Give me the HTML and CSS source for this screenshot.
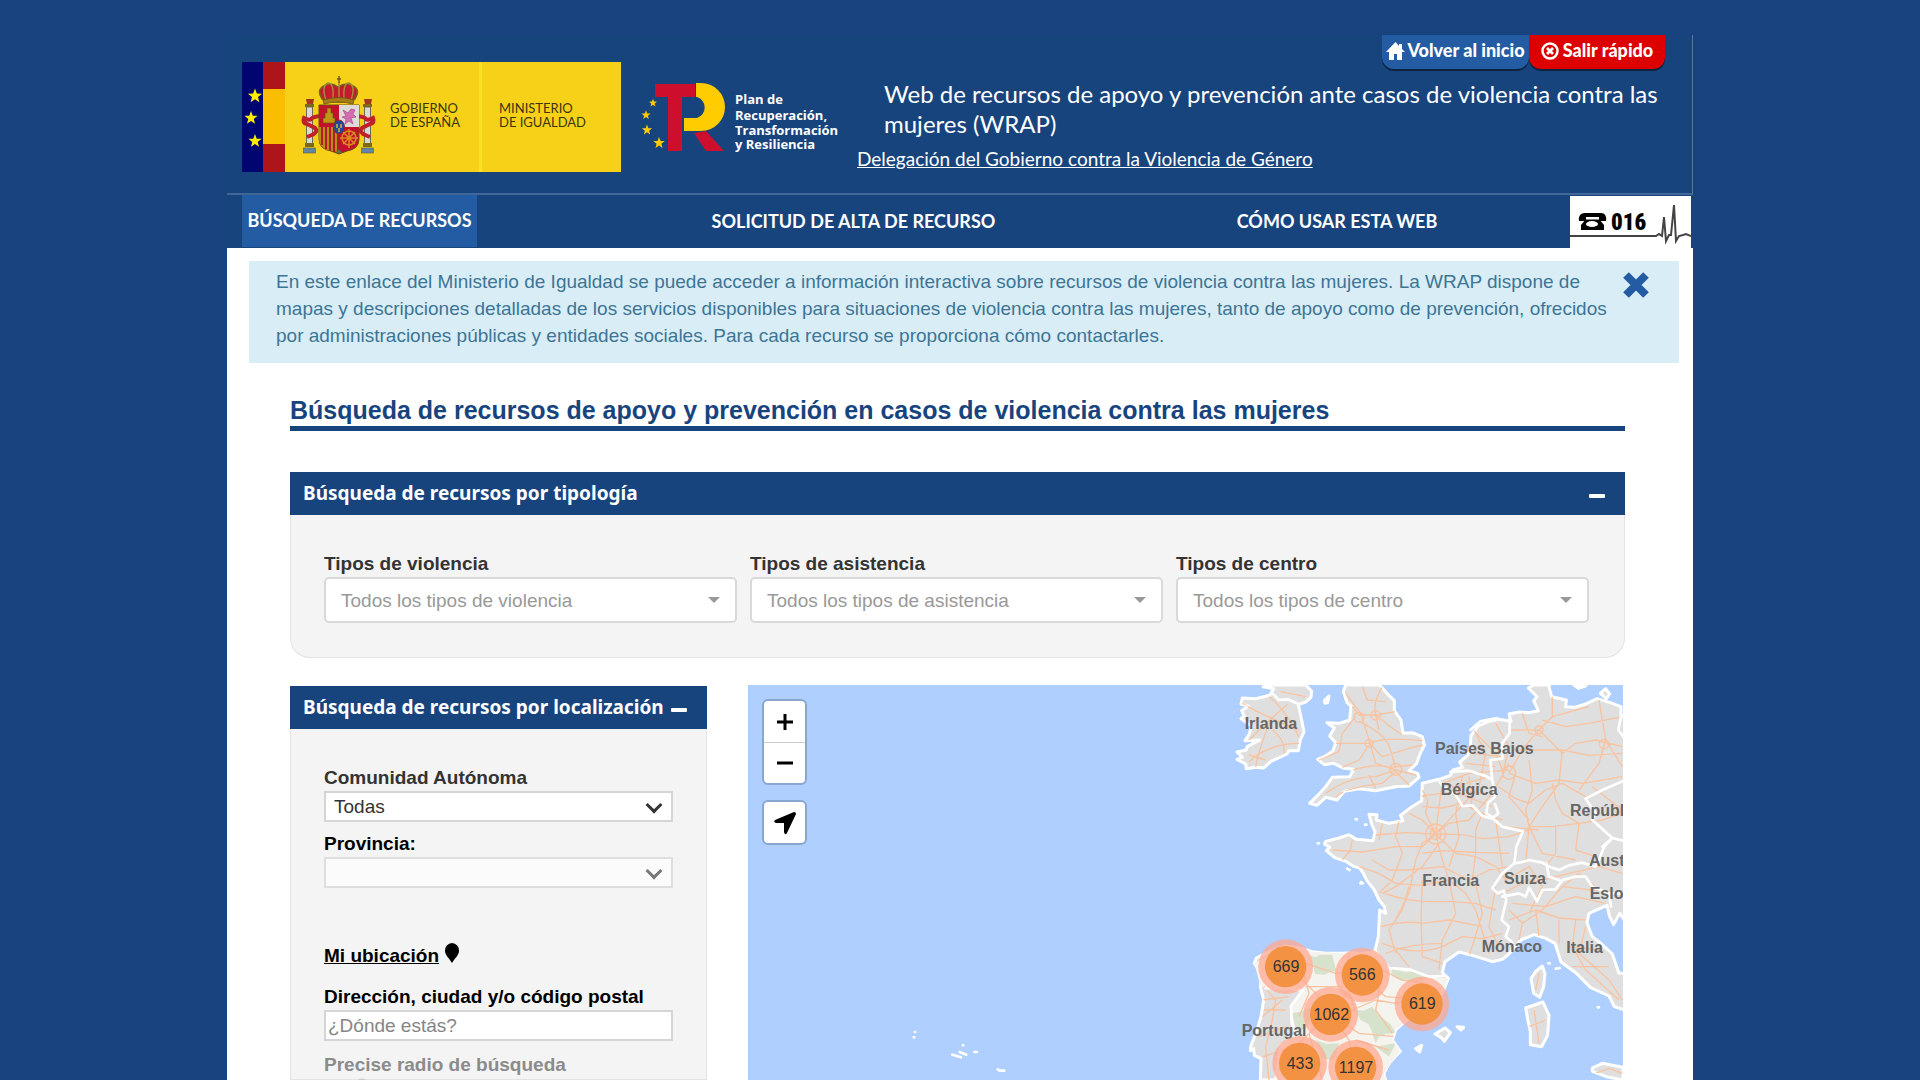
FILE: index.html
```html
<!DOCTYPE html>
<html lang="es">
<head>
<meta charset="utf-8">
<meta name="viewport" content="width=device-width, initial-scale=1">
<title>Web de recursos de apoyo y prevención (WRAP)</title>
<link rel="stylesheet" href="styles.css">
</head>
<body>
<div class="page">
  <header class="header">
    <div class="logos">
      <svg class="logo-gob" viewBox="0 0 379 110" role="img" aria-label="Gobierno de España. Ministerio de Igualdad">
        <defs><polygon id="star" points="0,-6 1.5,-2 5.7,-1.9 2.4,.8 3.5,4.9 0,2.5 -3.5,4.9 -2.4,.8 -5.7,-1.9 -1.5,-2"/></defs>
        <rect width="379" height="110" fill="#f7d117"/>
        <rect width="21" height="110" fill="#000671"/>
        <rect x="21" width="22" height="110" fill="#ad1519"/>
        <rect x="21" y="27" width="22" height="55" fill="#fabd00"/>
        <g fill="#ffed00"><use href="#star" transform="translate(13 34) scale(1.25)"/><use href="#star" transform="translate(9 56) scale(1.15)"/><use href="#star" transform="translate(13 79) scale(1.15)"/></g>
        <rect x="237" width="3" height="110" fill="#fbe122"/>
        <!-- escudo -->
        <g>
          <g fill="#d9d9d4" stroke="#6b6a55" stroke-width="1"><rect x="64.500" y="45" width="6" height="38"/><rect x="122.500" y="45" width="6" height="38"/></g>
          <g fill="#a5371e"><path d="M64 37h8l-1 5h-6zM122 37h8l-1 5h-6z"/></g>
          <g fill="#7d6a16"><rect x="63" y="42" width="9" height="3"/><rect x="121" y="42" width="9" height="3"/><rect x="63" y="81" width="9" height="4"/><rect x="121" y="81" width="9" height="4"/></g>
          <g fill="#5f87a5" stroke="#5b5b3b" stroke-width=".6"><rect x="61.500" y="86" width="12" height="5"/><rect x="119.500" y="86" width="12" height="5"/></g>
          <g fill="none" stroke="#c31f2b" stroke-width="4"><path d="M78 54q-8 1-9 3t-7-1q-2 5 3 6l8 4q3 3-1 6l-7 3M115 54q8 1 9 3t7-1q2 5-3 6l-8 4q-3 3 1 6l7 3"/></g>
          <path d="M77 43h40v34q0 10-12 12l-8 3-8-3q-12-2-12-12z" fill="#c4102a" stroke="#6a4d16" stroke-width="1"/>
          <path d="M97 43h20v22H97z" fill="#dedad6"/>
          <path d="M77 65h20v25q-20-1-20-13z" fill="#b98c13"/>
          <path d="M80 65v18M84 65v22M88 65v24M92 65v25M96 65v26" stroke="#b21c24" stroke-width="2"/>
          <path d="M81 61v-5h2v-5h2v-5h4v5h2v5h2v5z" fill="#c19512" stroke="#6c520e" stroke-width=".7"/>
          <path d="M101 48l5 3 3-4 4 1-2 4 3 3-5 1 2 6-4-3-4 3 1-5-4-2 4-1z" fill="#d66bb4" stroke="#a8478d" stroke-width=".7"/>
          <g fill="none" stroke="#d98c1d" stroke-width="1.500"><circle cx="107" cy="76" r="7"/><path d="M107 67v19M98 76h18M101 70l12 12M113 70l-12 12"/></g>
          <ellipse cx="97" cy="65" rx="5.500" ry="7" fill="#1d4a9c" stroke="#9f2130" stroke-width="1"/>
          <path d="M95 62v4M99 62v4M97 66v4" stroke="#d9b92a" stroke-width="1.500"/>
          <path d="M94 91l3-4 3 4z" fill="#4e7b47"/>
          <path d="M80 37q-5-8 0-12 8-6 16 0 9-6 17 0 5 4 0 12-16 6-33 0z" fill="#c61a2c" stroke="#77601a" stroke-width="1.500"/>
          <path d="M84 38q-5-14 2-17 6 0 5 15M109 38q5-14-2-17-6 0-5 15M97 35V20" fill="none" stroke="#a28a3b" stroke-width="1.500"/>
          <path d="M81 38q16-5 31 0l-1 4q-15-4-29 0z" fill="#a57c16" stroke="#6b4d12" stroke-width=".8"/>
          <path d="M97 14v7M95 17h4" stroke="#6c5a18" stroke-width="1.400"/>
        </g>
        <g class="gob-text"><text x="148" y="51">GOBIERNO</text><text x="148" y="65">DE ESPAÑA</text><text x="257" y="51">MINISTERIO</text><text x="257" y="65">DE IGUALDAD</text></g>
      </svg>
      <svg class="logo-plan" viewBox="0 0 202 110" role="img" aria-label="Plan de Recuperación, Transformación y Resiliencia">
        <path d="M16 22h40v13H43v54H29V35H16z" fill="#cd0f2d"/>
        <path d="M55 71l12-2 18 20H67z" fill="#cd0f2d"/>
        <path d="M57 21h5a24 24 0 0 1 0 48H45V56h13a11 11 0 0 0 0-21h-1z" fill="#ffcc00"/>
        <g fill="#ffcc00"><use href="#star" transform="translate(14 41) scale(.7)"/><use href="#star" transform="translate(7 53) scale(.8)"/><use href="#star" transform="translate(8 68) scale(.9)"/><use href="#star" transform="translate(20 81)"/></g>
        <g class="plan-text"><text x="96" y="42">Plan de</text><text x="96" y="58">Recuperación,</text><text x="96" y="73">Transformación</text><text x="96" y="87">y Resiliencia</text></g>
      </svg>
    </div>
    <div class="heading">
      <div class="quick">
        <a class="quick-link home" href="#"><svg width="19" height="18" viewBox="0 0 19 18"><path d="M9.500 0L0 10h3v8h5v-6h3v6h5v-8h3l-3-3V2h-3v2z" fill="#fff"/></svg>Volver al inicio</a>
        <a class="quick-link exit" href="#"><svg width="18" height="18" viewBox="0 0 18 18"><g fill="none" stroke="#fff"><circle cx="9" cy="9" r="7.500" stroke-width="2.500"/><path d="M6 6l6 6M12 6l-6 6" stroke-width="2.800"/></g></svg>Salir rápido</a>
      </div>
      <h1>Web de recursos de apoyo y prevención ante casos de violencia contra las mujeres (WRAP)</h1>
      <a class="delegation" href="#">Delegación del Gobierno contra la Violencia de Género</a>
    </div>
  </header>
  <nav class="nav">
    <a class="active" href="#">BÚSQUEDA DE RECURSOS</a>
    <a href="#">SOLICITUD DE ALTA DE RECURSO</a>
    <a href="#">CÓMO USAR ESTA WEB</a>
    <a class="phone" href="#" aria-label="Teléfono 016">
      <svg viewBox="0 0 121 52"><rect width="121" height="52" fill="#fff"/>
        <path d="M9 25q-1-8 6-8h16q6 0 5 8h-7v-4H16v4z"/><path d="M16 23h13l5 6v5H11v-5z"/><ellipse cx="22" cy="28" rx="6" ry="3" fill="#fff"/><path d="M16 23h13" stroke="#fff"/>
        <text class="phone-number" x="41" y="34">016</text>
        <path d="M0 40h86l3-2 3 2 2-19 2 24 3-6h2l3-30 2 36 3-5 4-1 3-1 5 2" fill="none" stroke="#444" stroke-width="2"/></svg>
    </a>
  </nav>
  <main>
    <div class="alert">
      <p>En este enlace del Ministerio de Igualdad se puede acceder a información interactiva sobre recursos de violencia contra las mujeres. La WRAP dispone de mapas y descripciones detalladas de los servicios disponibles para situaciones de violencia contra las mujeres, tanto de apoyo como de prevención, ofrecidos por administraciones públicas y entidades sociales. Para cada recurso se proporciona cómo contactarles.</p>
      <button class="close" type="button" aria-label="Cerrar"><svg width="26" height="26" viewBox="0 0 26 26"><path d="M3 3l20 20M23 3L3 23" stroke="#245ca3" stroke-width="8"/></svg></button>
    </div>
    <div class="content">
      <h2>Búsqueda de recursos de apoyo y prevención en casos de violencia contra las mujeres</h2>
      <section class="panel rounded">
        <div class="panel-head"><h3>Búsqueda de recursos por tipología</h3><button type="button" class="toggle" aria-label="Contraer"></button></div>
        <div class="types">
          <div><label for="t1">Tipos de violencia</label><div class="pick"><select id="t1"><option>Todos los tipos de violencia</option></select></div></div>
          <div><label for="t2">Tipos de asistencia</label><div class="pick"><select id="t2"><option>Todos los tipos de asistencia</option></select></div></div>
          <div><label for="t3">Tipos de centro</label><div class="pick"><select id="t3"><option>Todos los tipos de centro</option></select></div></div>
        </div>
      </section>
      <div class="lower">
        <section class="panel">
          <div class="panel-head"><h3>Búsqueda de recursos por localización</h3><button type="button" class="toggle" aria-label="Contraer"></button></div>
          <form class="place">
            <label for="ca">Comunidad Autónoma</label>
            <div class="drop"><select id="ca"><option>Todas</option></select></div>
            <label class="dark" for="prov">Provincia:</label>
            <div class="drop off"><select id="prov" disabled><option></option></select></div>
            <p class="mine"><a href="#">Mi ubicación</a><svg width="16" height="20" viewBox="0 0 16 20"><path d="M8 0a7.500 7.500 0 0 1 7 8c0 4-4 7-7 12C5 15 1 12 1 8a7.500 7.500 0 0 1 7-8z"/></svg></p>
            <label class="dark" for="dir">Dirección, ciudad y/o código postal</label>
            <input id="dir" type="text" placeholder="¿Dónde estás?">
            <label class="muted" for="radio">Precise radio de búsqueda</label>
            <input id="radio" class="range" type="range" min="0" max="100" value="9" disabled>
          </form>
        </section>
        <section class="map" aria-label="Mapa de recursos">
          <svg class="map-canvas" viewBox="-1386 15 2628 1185" preserveAspectRatio="xMaxYMin slice">
            <defs>
              <path id="mainland" d="M975 15L958 24 984 50 974 62 988 92 960 98 930 96 900 102 906 124 870 118 840 124 808 138 786 166 784 200 776 226 752 246 760 262 732 270 724 286 690 298 640 310 638 362 606 382 574 406 582 422 540 430 502 420 504 404 480 403 488 432 498 456 492 482 442 478 420 464 390 474 350 484 346 492 362 502 352 512 376 532 410 544 436 560 452 564 464 582 474 602 496 630 510 660 526 680 530 700 512 690 510 730 508 770 498 812 470 824 434 818 400 820 350 820 310 815 280 806 230 798 180 815 142 834 136 850 156 880 154 920 164 960 156 1010 144 1050 126 1096 124 1112 134 1106 136 1126 156 1136 154 1200 H530L524 1182 540 1150 574 1114 550 1080 560 1050 604 1010 660 970 700 940 718 895 700 878 708 845 750 816 790 826 850 845 880 838 900 822 936 780 975 764 1010 775 1038 790 1056 846 1100 878 1144 922 1200 948 1216 980 1260 994V880L1230 880 1210 822 1178 792 1150 770 1134 728 1140 700 1194 676 1202 710 1214 734 1232 700 1260 740V100L1236 110 1236 80 1204 68 1164 56 1130 72 1096 82 1070 80 1072 60 1028 50 1020 20 1022 15z"/>
              <path id="isles" d="M170 15L162 20 194 26 182 46 140 56 100 54 96 72 118 78 98 92 106 108 96 116 128 138 120 164 108 182 152 180 114 200 112 210 84 216 100 232 84 238 110 252 112 266 140 262 164 264 186 244 234 222 240 212 268 212 274 180 285 156 278 120 268 74 290 66 306 52 308 34 290 15zM410 15L403 34 414 68 426 78 422 120 390 130 354 128 376 144 362 168 380 188 372 212 346 230 326 238 346 254 374 250 402 264 434 268 422 290 370 292 350 320 322 350 302 370 324 376 350 352 384 360 406 334 450 326 500 332 560 320 600 318 630 292 626 280 600 272 622 252 634 220 646 196 640 170 610 158 582 160 576 120 556 92 556 62 534 40 512 15zM1094 15l14 10 20-6 4-4zM1174 40l16-14 12 16-10 14zM346 62l14-14-4 20-8 2zM966 896l14-22 20-16 8 22-4 40-12 32-18-12zM950 984l52-18 18 40-4 60-18 34-34-6 0-40-8-36zM1150 1164l30-14 62 12v38l-50-10-42-16zM678 1062l30-18 16 14-18 26-10-12zM744 1040l20 2-8 8zM620 1106l18-10-6 20z"/>
              <clipPath id="land"><use href="#mainland"/><use href="#isles"/></clipPath>
              <clipPath id="spain"><path d="M136 850L154 918 170 925 236 924 280 932 246 978 248 1030 262 1062 214 1100 200 1200H530L524 1182 574 1114 550 1080 560 1050 604 1010 700 940 718 895 660 890 600 868 540 864 498 812 400 820 310 815 230 798z"/></clipPath>
            </defs>
            <rect x="-1386" y="15" width="2700" height="1400" fill="#aecfff"/>
            <g fill="#dfdfdf" stroke="#fff" stroke-width="9" stroke-linejoin="round"><use href="#isles"/><use href="#mainland"/></g>
            <g clip-path="url(#spain)">
              <rect x="100" y="780" width="640" height="430" fill="#f5f3ee"/>
              <g fill="#cfddc4" opacity=".8"><path d="M300 826l20 6 12-8 38 0 4 20 8 28-20 4-14 8-30-2-4-22zM548 866l40 10 40-4 24 20-14 12-30 2-16-8-14 6-30-16zM440 990l24 2 26-12 20 26 34 26 16 26-30 4-16 8-24-14-12-24-24-12zM250 1000l30-6 30-14-4 30-14 34-30 10zM320 1080l34 12 36-2-6 26-14 26-30-8zM500 1100l60-10-20 40zM480 1030l40 20-20 40zM230 900l40-4-20 24z"/></g>
            </g>
            <g class="roads" clip-path="url(#land)">
              <path d="M120 180Q170 130 236 72M100 70Q150 100 268 150M180 50Q230 90 270 170M120 245Q180 190 270 190M140 262Q150 200 190 110M190 150Q230 180 225 220M215 35L290 50M120 225L170 240"/>
              <path d="M410 40L455 100 480 180 500 250 560 270M520 20Q490 70 500 105 540 140 580 165M430 80L450 105 500 105 560 95M440 110L400 160 390 215 330 240M480 190Q530 170 640 182M450 125Q530 160 545 210L560 265M380 190L480 190 520 230 600 205 640 195M400 262L450 240 480 195M350 340Q420 290 500 290L560 270 620 285M380 350Q420 320 520 310L560 275 600 315M430 270Q500 250 540 262L610 255M460 20L475 60 530 65M500 105L510 150M480 285L500 325"/>
              <circle cx="560" cy="268" r="18"/><circle cx="450" cy="112" r="15"/><circle cx="500" cy="106" r="14"/><circle cx="480" cy="190" r="12"/>
              <path d="M680 462L650 400 656 360 640 330M680 462L690 380 700 310 780 280 900 270M680 462L720 430 780 420 850 340 900 250M680 462Q740 400 810 320L830 220 790 140M680 462L760 464 820 476 900 470 960 450M680 462L740 520 800 530 860 560 890 600M680 462L700 540 720 600 770 640 800 690 840 820M680 462L640 490 620 540 600 640 560 720M680 462L640 500 560 500 460 516 370 510M680 462L590 458 500 465M680 462L640 420 600 400M640 380L700 384 760 370 820 400 880 420M570 420L560 470 580 520 550 600 510 640M430 480L424 510 400 540M640 520L700 512 780 516 900 520M490 540L540 570 600 570 700 560 780 600 840 570 900 560M450 560L510 580 560 610 640 616 720 600M760 290L740 400 750 470 720 560M820 400L800 450 800 520 790 600M690 490L640 560 560 620 520 640M860 420L870 490 880 560M520 430L510 480M620 350L700 340 830 340"/>
              <circle cx="680" cy="462" r="16"/><circle cx="680" cy="462" r="30"/>
              <path d="M530 640Q600 670 720 664L800 670 860 690M515 740Q590 720 640 730L720 720 820 740M520 790Q620 830 700 800L760 770 820 776 880 760M600 620L580 690 540 750 560 820M640 600L636 720 640 830M720 600L740 700 700 780 690 870M800 610L820 700 780 830M860 620L840 740 870 800M530 820Q600 790 700 790M640 830L700 850M560 810L600 860"/>
              <path d="M1030 20L1030 110 980 160 940 210 900 280M1000 120L1070 140 1140 130 1240 110M900 150L990 150 1060 220 1100 190 1160 180 1240 200M910 210L1060 210 1140 226 1240 220M960 240L970 330 950 390 960 440 950 550M900 280L980 310 1050 300 1120 310 1240 290M870 320L920 356 960 370 1010 330 1060 310 1130 350M920 280L900 350 960 420M1060 210L1050 310 1000 380 960 440 1030 440 1110 430 1180 420M1170 60L1190 180 1170 250 1110 330M1110 430L1060 400 1040 360 1030 310M960 440L1000 520 1100 540M1040 440L1040 520 1010 560M1110 430L1100 510 1160 530M890 440L990 450M1190 180L1240 260M860 130L900 200 880 290M800 160L860 220 880 270M790 220L880 230M770 250L860 260M940 100L960 160 1000 170M1030 110L1140 80M1150 320L1240 390M1180 420L1240 400"/>
              <circle cx="900" cy="278" r="20"/><circle cx="1185" cy="192" r="14"/><circle cx="990" cy="150" r="12"/>
              <path d="M720 310L760 345 850 380M740 320L840 290M780 290L790 390M890 600L960 560 1000 620 960 700M880 640L960 600 1010 610M900 720L980 690 1050 714 1130 720M900 690L940 730 1000 690 1060 620 1240 640M910 670L1010 680 1100 650 1190 670M980 690L990 770M940 730L930 780M1050 720L1050 790M1100 720L1090 800 1130 870 1230 960M1130 740L1110 820 1200 900 1240 960M1080 800L1170 810M1090 860L1200 860M1000 600L1080 580 1170 560 1240 580M1060 620L1110 580 1160 620M990 880L980 930M975 990L990 1090M960 1040L1010 1020M1160 1180L1200 1165 1240 1180"/>
              <path d="M170 860L290 850 380 880 500 860M160 960L240 950M165 990L230 990M165 920L200 960 190 1020M150 1070L230 1040M160 1130L260 1100M180 1200L170 1100 190 1020M365 1000L460 885M365 1000L320 940 250 870M365 1000L280 1080 200 1180M365 1000L420 1080 440 1160M365 1000L430 990 500 960 560 970 640 950M365 1000L450 1060 560 1070M460 885L530 950 640 960M500 890L510 940 500 990 550 1060M280 860L300 940 270 1010M440 1080L540 1110M290 920L400 920M220 960L160 1010M520 870L580 900 640 910M420 820L410 900 440 1000M300 1060L340 1200"/>
            </g>
            <g class="borders">
              <path d="M688 300L702 320 740 344 760 378 790 376 820 408 852 416 880 440 942 454 922 500 916 550 940 546 960 540 1000 548 1020 560 1050 570 1080 556 1120 548 1160 560 1186 500 1210 474 1150 420 1160 400 1130 356 1180 330 1250 300M724 276L780 272 830 288 850 300 844 240 880 236 880 190 902 160 902 104M850 300L858 350 836 370 832 400 852 412M858 372L868 400 852 414M916 550L880 580 850 624 866 640 884 632 892 660 878 720 900 740 890 770 912 788M880 650L930 640 950 650 960 622 984 664 1000 630 1040 628 1060 600 1100 590 1130 590 1150 620 1200 640 1250 640M1012 550L1020 590 1050 600M1180 500L1210 474 1250 484M1200 640L1206 680M498 812L540 864 600 868 660 890 705 888M170 925L236 924 280 932 246 978 248 1030 262 1062 214 1100 200 1200M188 38L210 60 236 58 268 72M1236 110L1228 150 1250 180"/>
              <path d="M784 150l30-26 50-10M440 418h4M468 434h4M326 490h4M414 566l8 4M456 606l6 4M1018 850h4M1040 866l12-2M1166 982h4M454 610h4"/>
              <path d="M-886 1072h2M-882 1056h1M-770 1124l26 8M-748 1116l20 8M-738 1096h1M-704 1116h8M-634 1168l6 4h14"/>
            </g>
            <g class="places">
              <text x="107" y="148">Irlanda</text><text x="678" y="222">Países Bajos</text><text x="695" y="345">Bélgica</text><text x="1083" y="408">Repúbl</text><text x="1140" y="557">Aust</text><text x="640" y="617">Francia</text><text x="885" y="611">Suiza</text><text x="1142" y="656">Eslo</text><text x="818" y="815">Mónaco</text><text x="1072" y="819">Italia</text><text x="98" y="1068">Portugal</text>
            </g>
            <g class="halo"><circle cx="230" cy="860" r="82"/><circle cx="460" cy="885" r="82"/><circle cx="639" cy="972" r="82"/><circle cx="365" cy="1003" r="82"/><circle cx="272" cy="1150" r="82"/><circle cx="440" cy="1162" r="82"/></g>
            <g class="core"><circle cx="230" cy="860" r="62"/><circle cx="460" cy="885" r="62"/><circle cx="639" cy="972" r="62"/><circle cx="365" cy="1003" r="62"/><circle cx="272" cy="1150" r="62"/><circle cx="440" cy="1162" r="62"/></g>
            <g class="counts"><text x="231" y="876">669</text><text x="460" y="901">566</text><text x="640" y="987">619</text><text x="367" y="1019">1062</text><text x="273" y="1166">433</text><text x="441" y="1178">1197</text></g>
          </svg>
          <div class="controls">
            <div class="bar">
              <button type="button" aria-label="Acercar"><svg width="18" height="18" viewBox="0 0 18 18"><path d="M1 9h16M9 1v16" stroke="#000" stroke-width="3"/></svg></button>
              <button type="button" aria-label="Alejar"><svg width="18" height="18" viewBox="0 0 18 18"><path d="M1 9h16" stroke="#000" stroke-width="3"/></svg></button>
            </div>
            <div class="bar"><button type="button" aria-label="Localizar"><svg width="22" height="24" viewBox="0 0 22 24"><path d="M20 1q2 0 2 2L13 22q-2 3-3-1v-9H2q-3-1-1-3z"/></svg></button></div>
          </div>
        </section>
      </div>
    </div>
  </main>
</div>
</body>
</html>
```
FILE: styles.css
```css
* { box-sizing: border-box; }
body {
  margin: 0;
  height: 100vh;
  overflow: hidden;
  background: #18437f;
  color: #333;
  font: 19px/25px "Liberation Sans", Arial, sans-serif;
}
h1, h2, h3, p { margin: 0; }
svg { display: block; flex: none; }
button, select, input { font: inherit; color: inherit; }
button { padding: 0; border: 0; background: none; cursor: pointer; }

.page {
  display: flex;
  flex-direction: column;
  height: 100%;
  max-width: 1466px;
  margin: 0 auto;
  padding-top: 35px;
}

.header {
  display: flex;
  gap: 15px;
  min-height: 160px;
  padding: 0 27px 0 15px;
  background: #18447e;
  border-right: 1px solid #56779f;
  border-bottom: 2px solid #41669a;
  font-family: Lato, sans-serif;
  color: #fff;
}
.logos { display: flex; gap: 17px; padding-top: 27px; }
.logo-gob { width: 379px; height: 110px; }
.logo-plan { width: 204px; height: 110px; }
.gob-text { font: 13px Lato, sans-serif; fill: #3b3512; }
.plan-text { font: 700 13px "Open Sans", sans-serif; fill: #fff; }
.heading { flex: 1; }
.quick { display: flex; justify-content: flex-end; margin-bottom: 10px; }
.quick-link {
  display: flex;
  align-items: center;
  justify-content: center;
  height: 34px;
  padding-bottom: 3px;
  border-radius: 0 0 12px 12px;
  box-shadow: 0 2px 0 #0c2340;
  font-size: 18px;
  font-weight: 900;
  color: #fff;
  text-decoration: none;
}
.home { width: 147px; gap: 2px; background: #245ca3; }
.exit { width: 136px; gap: 4px; background: #d00; }
h1 { padding-left: 27px; font-size: 24px; line-height: 30px; font-weight: 400; }
.delegation { display: inline-block; margin-top: 8px; line-height: 24px; color: #fff; }

.nav {
  display: grid;
  grid-template-columns: 235px 1fr 214px 249px;
  height: 53px;
  padding-left: 15px;
  background: #18447e;
  font: 700 18px Lato, sans-serif;
  flex: none;
}
.nav a {
  display: flex;
  align-items: center;
  justify-content: center;
  padding-bottom: 2px;
  color: #fff;
  text-decoration: none;
  white-space: nowrap;
}
.nav .active { margin-bottom: 1px; background: #245ca3; }
.nav .phone { justify-content: flex-end; padding: 1px 2px 0 0; }
.phone svg { width: 121px; height: 52px; }
.phone-number { font: 900 23px "Roboto Condensed", Roboto, sans-serif; }

main {
  display: flex;
  flex-direction: column;
  flex: 1;
  min-height: 0;
  background: #fff;
}
.alert {
  display: flex;
  gap: 7px;
  margin: 13px 14px 0 22px;
  padding: 7px 30px 14px 27px;
  background: #d9edf7;
  color: #3d7595;
  line-height: 27px;
}
.alert p { flex: 1; }
.close { align-self: flex-start; margin-top: 4px; }

.content {
  display: flex;
  flex-direction: column;
  flex: 1;
  min-height: 0;
  padding: 32px 68px 0 63px;
}
h2 {
  margin-bottom: 41px;
  padding-bottom: 1px;
  border-bottom: 5px solid #18447e;
  font-size: 25px;
  line-height: 30px;
  color: #18447e;
}
.panel { background: #f4f4f4; border: 1px solid #e3e3e3; border-top: 0; }
.rounded { border-radius: 0 0 20px 20px; }
.panel-head {
  display: flex;
  align-items: center;
  justify-content: space-between;
  height: 43px;
  margin: 0 -1px;
  padding: 0 20px 0 13px;
  background: #18447e;
  color: #fff;
}
h3 { font: 700 19px/25px "Noto Sans", sans-serif; white-space: nowrap; }
.toggle { width: 16px; height: 4px; margin-top: 5px; border-radius: 1px; background: #fff; }

label { display: block; height: 26px; font-weight: 700; }
.types {
  display: grid;
  grid-template-columns: repeat(3, 1fr);
  gap: 13px;
  padding: 36px 35px 34px 33px;
}
.pick, .drop { position: relative; }
select { width: 100%; appearance: none; background: #fff; opacity: 1; }
.pick select {
  display: block;
  height: 46px;
  padding: 0 15px;
  border: 2px solid #d9d9d9;
  border-radius: 5px;
  color: #999;
}
.pick::after {
  content: "";
  position: absolute;
  right: 17px;
  top: 20px;
  border: 6px solid transparent;
  border-top-color: #999;
  border-bottom: 0;
}

.lower {
  display: grid;
  grid-template-columns: 417px 1fr;
  grid-template-rows: minmax(0, 1fr);
  gap: 41px;
  flex: 1;
  min-height: 0;
  padding-top: 27px;
  padding-right: 2px;
}
.lower .panel { margin-top: 1px; }
.place { display: flex; flex-direction: column; padding: 36px 33px 0; }
.drop { margin-bottom: 9px; }
.drop select, .place input[type="text"] {
  display: block;
  width: 100%;
  height: 31px;
  padding: 0 8px;
  border: 2px solid #d5d5d5;
  border-radius: 0;
  background: #fff;
}
.drop.off select { background: #fbfbfb; border-color: #dedede; }
.drop::after {
  content: "";
  position: absolute;
  right: 13px;
  top: 8px;
  width: 9px;
  height: 9px;
  border: solid #333;
  border-width: 0 3px 3px 0;
  transform: rotate(45deg);
}
.drop.off::after { border-color: #777; }
.place .dark { color: #000; }
.place .muted { margin-top: 11px; color: #8b8b8b; }
.mine { display: flex; gap: 5px; margin: 46px 0 16px; font-weight: 700; }
.mine a { color: #000; }
.place input[type="text"] { padding: 0 2px; }
.place input::placeholder { color: #858585; opacity: 1; }
.range { width: 100%; margin: 0; }

.map { position: relative; min-height: 0; overflow: hidden; }
.map-canvas { width: 100%; height: 100%; }
.roads { fill: none; stroke: #f8c3a0; stroke-width: 4; stroke-linejoin: round; }
.borders { fill: none; stroke: #fff; stroke-width: 8; stroke-linejoin: round; stroke-linecap: round; }
.places { font: 700 48px "Liberation Sans", Arial, sans-serif; fill: #666; }
.halo { fill: #ffa890; fill-opacity: .75; }
.core { fill: #f28f3b; fill-opacity: .93; }
.counts { font: 48px "Liberation Sans", Arial, sans-serif; fill: #333; text-anchor: middle; }
.controls { position: absolute; left: 14px; top: 14px; display: grid; gap: 15px; }
.bar { width: 45px; border: 2px solid #8aa6cf; border-radius: 6px; background: #fff; }
.bar button { display: grid; place-items: center; width: 100%; height: 41px; }
.bar button + button { border-top: 1px solid #ccc; }
```
